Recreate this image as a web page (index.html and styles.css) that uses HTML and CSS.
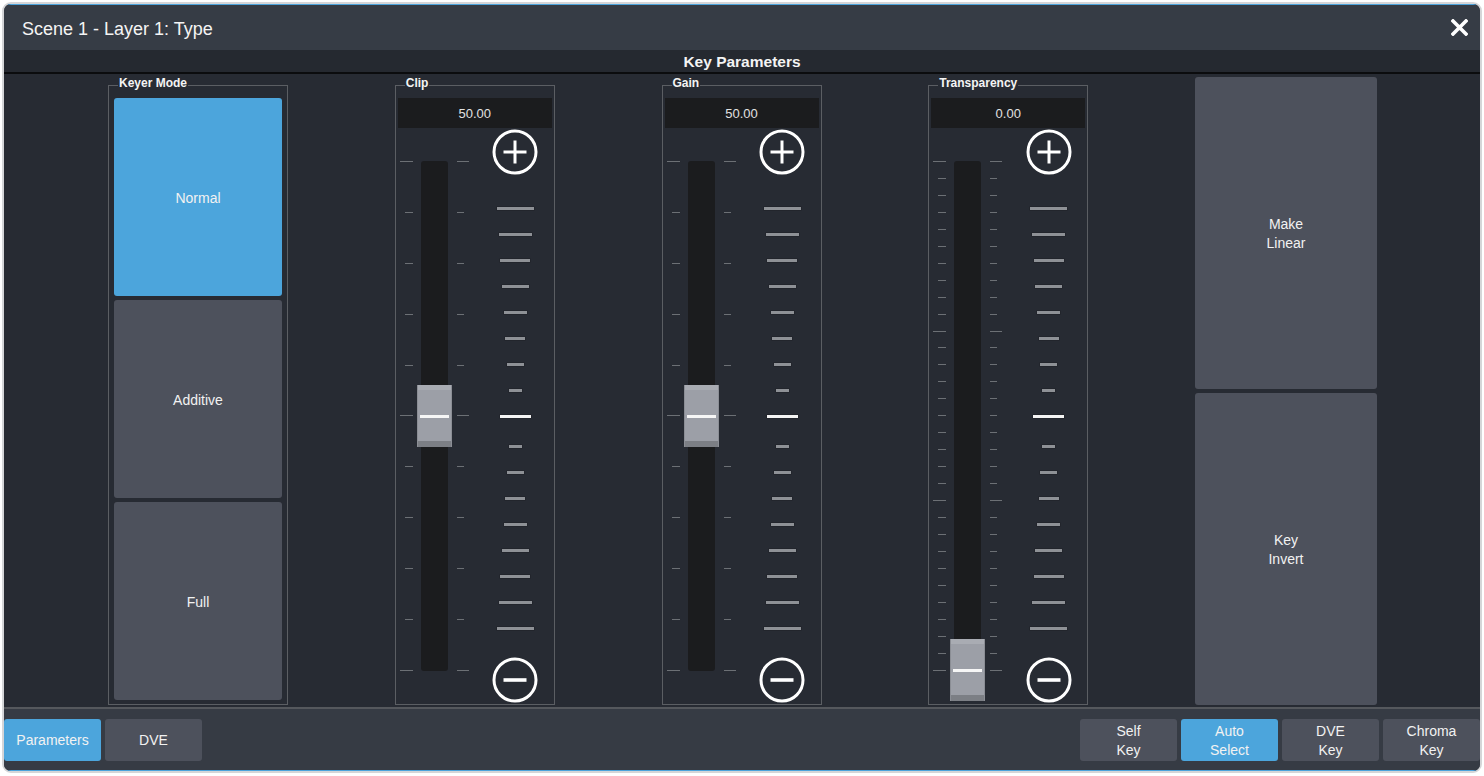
FILE: index.html
```html
<!DOCTYPE html>
<html lang="en">
<head>
<meta charset="utf-8">
<title>Scene 1 - Layer 1: Type</title>
<link rel="stylesheet" href="styles.css">
</head>
<body>
<div class="window">
  <div class="titlebar">
    <span class="title">Scene 1 - Layer 1: Type</span>
    <button class="close" aria-label="Close">
      <svg width="17" height="17" viewBox="0 0 17 17"><path d="M2 2 L15 15 M15 2 L2 15" stroke="#fff" stroke-width="3.6" stroke-linecap="square"/></svg>
    </button>
  </div>
  <div class="header">Key Parameters</div>
  <div class="content">
    <fieldset class="group">
      <legend>Keyer Mode</legend>
      <div class="keyer-body">
        <button class="mode active">Normal</button>
        <button class="mode">Additive</button>
        <button class="mode">Full</button>
      </div>
    </fieldset>

    <fieldset class="group">
      <legend>Clip</legend>
      <div class="slider-body">
        <div class="value">50.00</div>
        <div class="slider-main">
          <div class="rail">
            <div class="ticks left"><span class="tick long"></span><span class="tick"></span><span class="tick"></span><span class="tick"></span><span class="tick"></span><span class="tick long"></span><span class="tick"></span><span class="tick"></span><span class="tick"></span><span class="tick"></span><span class="tick long"></span></div>
            <div class="track"><div class="handle" style="top:224px"></div></div>
            <div class="ticks right"><span class="tick long"></span><span class="tick"></span><span class="tick"></span><span class="tick"></span><span class="tick"></span><span class="tick long"></span><span class="tick"></span><span class="tick"></span><span class="tick"></span><span class="tick"></span><span class="tick long"></span></div>
          </div>
          <div class="adjust">
            <svg class="step" width="46" height="46" viewBox="0 0 46 46"><circle cx="23" cy="23" r="21" fill="none" stroke="#fff" stroke-width="3"/><path d="M11.5 23 H34.5 M23 11.5 V34.5" stroke="#fff" stroke-width="3"/></svg>
            <div class="ladder"><span></span><span></span><span></span><span></span><span></span><span></span><span></span><span></span><span class="mid"></span><span></span><span></span><span></span><span></span><span></span><span></span><span></span><span></span></div>
            <svg class="step minus" width="46" height="46" viewBox="0 0 46 46"><circle cx="23" cy="23" r="21" fill="none" stroke="#fff" stroke-width="3"/><path d="M11.5 23 H34.5" stroke="#fff" stroke-width="3.6"/></svg>
          </div>
        </div>
      </div>
    </fieldset>

    <fieldset class="group">
      <legend>Gain</legend>
      <div class="slider-body">
        <div class="value">50.00</div>
        <div class="slider-main">
          <div class="rail">
            <div class="ticks left"><span class="tick long"></span><span class="tick"></span><span class="tick"></span><span class="tick"></span><span class="tick"></span><span class="tick long"></span><span class="tick"></span><span class="tick"></span><span class="tick"></span><span class="tick"></span><span class="tick long"></span></div>
            <div class="track"><div class="handle" style="top:224px"></div></div>
            <div class="ticks right"><span class="tick long"></span><span class="tick"></span><span class="tick"></span><span class="tick"></span><span class="tick"></span><span class="tick long"></span><span class="tick"></span><span class="tick"></span><span class="tick"></span><span class="tick"></span><span class="tick long"></span></div>
          </div>
          <div class="adjust">
            <svg class="step" width="46" height="46" viewBox="0 0 46 46"><circle cx="23" cy="23" r="21" fill="none" stroke="#fff" stroke-width="3"/><path d="M11.5 23 H34.5 M23 11.5 V34.5" stroke="#fff" stroke-width="3"/></svg>
            <div class="ladder"><span></span><span></span><span></span><span></span><span></span><span></span><span></span><span></span><span class="mid"></span><span></span><span></span><span></span><span></span><span></span><span></span><span></span><span></span></div>
            <svg class="step minus" width="46" height="46" viewBox="0 0 46 46"><circle cx="23" cy="23" r="21" fill="none" stroke="#fff" stroke-width="3"/><path d="M11.5 23 H34.5" stroke="#fff" stroke-width="3.6"/></svg>
          </div>
        </div>
      </div>
    </fieldset>

    <fieldset class="group">
      <legend>Transparency</legend>
      <div class="slider-body">
        <div class="value">0.00</div>
        <div class="slider-main">
          <div class="rail">
            <div class="ticks left"><span class="tick long"></span><span class="tick"></span><span class="tick"></span><span class="tick"></span><span class="tick"></span><span class="tick"></span><span class="tick"></span><span class="tick"></span><span class="tick"></span><span class="tick"></span><span class="tick long"></span><span class="tick"></span><span class="tick"></span><span class="tick"></span><span class="tick"></span><span class="tick"></span><span class="tick"></span><span class="tick"></span><span class="tick"></span><span class="tick"></span><span class="tick long"></span><span class="tick"></span><span class="tick"></span><span class="tick"></span><span class="tick"></span><span class="tick"></span><span class="tick"></span><span class="tick"></span><span class="tick"></span><span class="tick"></span><span class="tick long"></span></div>
            <div class="track"><div class="handle" style="top:478px"></div></div>
            <div class="ticks right"><span class="tick long"></span><span class="tick"></span><span class="tick"></span><span class="tick"></span><span class="tick"></span><span class="tick"></span><span class="tick"></span><span class="tick"></span><span class="tick"></span><span class="tick"></span><span class="tick long"></span><span class="tick"></span><span class="tick"></span><span class="tick"></span><span class="tick"></span><span class="tick"></span><span class="tick"></span><span class="tick"></span><span class="tick"></span><span class="tick"></span><span class="tick long"></span><span class="tick"></span><span class="tick"></span><span class="tick"></span><span class="tick"></span><span class="tick"></span><span class="tick"></span><span class="tick"></span><span class="tick"></span><span class="tick"></span><span class="tick long"></span></div>
          </div>
          <div class="adjust">
            <svg class="step" width="46" height="46" viewBox="0 0 46 46"><circle cx="23" cy="23" r="21" fill="none" stroke="#fff" stroke-width="3"/><path d="M11.5 23 H34.5 M23 11.5 V34.5" stroke="#fff" stroke-width="3"/></svg>
            <div class="ladder"><span></span><span></span><span></span><span></span><span></span><span></span><span></span><span></span><span class="mid"></span><span></span><span></span><span></span><span></span><span></span><span></span><span></span><span></span></div>
            <svg class="step minus" width="46" height="46" viewBox="0 0 46 46"><circle cx="23" cy="23" r="21" fill="none" stroke="#fff" stroke-width="3"/><path d="M11.5 23 H34.5" stroke="#fff" stroke-width="3.6"/></svg>
          </div>
        </div>
      </div>
    </fieldset>

    <div class="toggles">
      <button class="toggle">Make<br>Linear</button>
      <button class="toggle">Key<br>Invert</button>
    </div>
  </div>
  <div class="footer">
    <div class="tabs">
      <button class="fbtn active">Parameters</button>
      <button class="fbtn">DVE</button>
    </div>
    <div class="keys">
      <button class="fbtn">Self<br>Key</button>
      <button class="fbtn active">Auto<br>Select</button>
      <button class="fbtn">DVE<br>Key</button>
      <button class="fbtn">Chroma<br>Key</button>
    </div>
  </div>
</div>
</body>
</html>
```

FILE: styles.css
```css
* { box-sizing: border-box; }

html, body {
  margin: 0;
  padding: 0;
  background: #ffffff;
}

body {
  font-family: "Liberation Sans", Arial, sans-serif;
  color: #f2f2f2;
}

button {
  font: inherit;
  color: inherit;
  border: 0;
  cursor: pointer;
}

.window {
  margin: 2px;
  width: 1480px;
  border: 2px solid #d5d6d8;
  border-radius: 9px;
  overflow: hidden;
  background: #272b33;
}

/* title bar */
.titlebar {
  height: 46px;
  border-top: 1px solid #4ba3dc;
  background: #363c45;
  display: flex;
  align-items: center;
  justify-content: space-between;
  padding: 3px 12px 0 18px;
}

.title {
  font-size: 18px;
  color: #f4f4f4;
}

.close {
  background: none;
  padding: 0;
  width: 17px;
  height: 17px;
  margin-top: -3px;
  display: flex;
}

/* header */
.header {
  height: 24px;
  padding-top: 1px;
  background: #252930;
  border-bottom: 2px solid #0b0c0e;
  text-align: center;
  font-weight: bold;
  font-size: 15.5px;
  line-height: 21px;
  color: #f4f4f4;
}

/* content */
.content {
  height: 633px;
  display: flex;
  justify-content: space-between;
  align-items: flex-start;
  padding: 0 103px 0 104px;
  background: #272b33;
}

.group {
  margin: 3px 0 0;
  padding: 0;
  min-width: 0;
  border: 1px solid #5b5e63;
  height: 628px;
}

.group legend {
  margin-left: 9px;
  padding: 0 1px 4px;
  font-weight: bold;
  font-size: 12px;
  line-height: 13px;
  color: #f4f4f4;
}

/* keyer mode */
.keyer-body {
  width: 178px;
  padding: 4px 5px 4px;
  display: flex;
  flex-direction: column;
  gap: 4px;
}

.mode {
  height: 198px;
  padding-top: 2px;
  background: #4d515c;
  border-radius: 3px;
  font-size: 14px;
  color: #f2f2f2;
}

.mode.active {
  background: #4ca5dc;
}

/* sliders */
.slider-body {
  width: 158px;
  padding: 4px 2px 0;
}

.value {
  height: 30px;
  background: #1b1c1e;
  color: #e2e2e2;
  font-size: 13px;
  display: flex;
  align-items: center;
  justify-content: center;
}

.slider-main {
  height: 576px;
  display: flex;
}

.rail {
  width: 81px;
  padding-top: 33px;
  display: flex;
  align-items: flex-start;
}

.ticks {
  height: 510px;
  display: flex;
  flex-direction: column;
  justify-content: space-between;
}

.ticks.left {
  width: 15px;
  align-items: flex-end;
}

.ticks.right {
  width: 12px;
  margin-left: 9px;
  align-items: flex-start;
}

.tick {
  display: block;
  height: 1px;
  background: #6c7075;
}

.ticks.left .tick { width: 8px; }
.ticks.left .tick.long { width: 13px; }
.ticks.right .tick { width: 7px; }
.ticks.right .tick.long { width: 12px; }

.track {
  position: relative;
  width: 27px;
  height: 510px;
  margin-left: 8px;
  background: #1b1c1e;
  border-radius: 3px;
}

.handle {
  position: absolute;
  left: -4px;
  width: 35px;
  height: 62px;
  background: linear-gradient(to bottom, #a9acb3 0, #a9acb3 5px, #9c9fa7 5px, #9c9fa7 56px, #7c7f85 56px, #7c7f85 62px);
  border-left: 1px solid #8b8e95;
  border-right: 1px solid #8b8e95;
}

.handle::after {
  content: "";
  position: absolute;
  left: 2px;
  right: 2px;
  top: 30px;
  height: 3px;
  background: #f6f6f6;
}

.adjust {
  width: 73px;
  display: flex;
  flex-direction: column;
  align-items: center;
}

.step {
  display: block;
  margin-top: 1px;
}

.step.minus {
  margin-top: 27px;
}

.ladder {
  margin-top: 32px;
  width: 37px;
  display: flex;
  flex-direction: column;
  gap: 23px;
  align-items: center;
}

.ladder span {
  display: block;
  height: 3px;
  background: #8e9196;
  box-shadow: 0 0 0 0.5px rgba(20, 22, 26, 0.5);
}

.ladder span:nth-child(1), .ladder span:nth-child(17) { width: 37px; }
.ladder span:nth-child(2), .ladder span:nth-child(16) { width: 33px; }
.ladder span:nth-child(3), .ladder span:nth-child(15) { width: 30px; }
.ladder span:nth-child(4), .ladder span:nth-child(14) { width: 27px; }
.ladder span:nth-child(5), .ladder span:nth-child(13) { width: 23px; }
.ladder span:nth-child(6), .ladder span:nth-child(12) { width: 20px; }
.ladder span:nth-child(7), .ladder span:nth-child(11) { width: 17px; }
.ladder span:nth-child(8), .ladder span:nth-child(10) { width: 13px; }
.ladder span.mid {
  width: 31px;
  margin-bottom: 4px;
  background: #f4f4f4;
}

/* toggles */
.toggles {
  margin-top: 3px;
  width: 182px;
  display: flex;
  flex-direction: column;
  gap: 4px;
}

.toggle {
  height: 312px;
  padding-top: 2px;
  background: #4d515c;
  border-radius: 3px;
  font-size: 14px;
  line-height: 19px;
  color: #f2f2f2;
}

/* footer */
.footer {
  height: 64px;
  border-top: 2px solid #55585d;
  border-bottom: 1px solid #4ba3dc;
  background: #363b44;
  display: flex;
  justify-content: space-between;
  padding-top: 10px;
}

.tabs, .keys {
  display: flex;
  gap: 4px;
  align-items: flex-start;
}

.fbtn {
  width: 97px;
  height: 42px;
  padding-top: 2px;
  background: #4d515c;
  border-radius: 3px;
  font-size: 14px;
  line-height: 19px;
  color: #f2f2f2;
}

.fbtn.active {
  background: #4ca5dc;
}
```
